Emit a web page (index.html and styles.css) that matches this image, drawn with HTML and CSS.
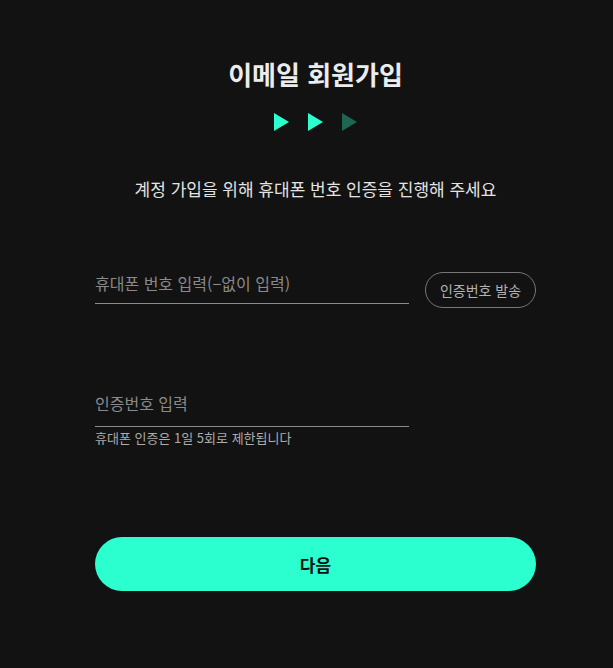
FILE: index.html
```html
<!DOCTYPE html>
<html lang="ko">
<head>
  <meta charset="UTF-8" />
  <meta name="viewport" content="width=device-width, initial-scale=1.0"/>
  <title>이메일 회원가입</title>
  <link rel="stylesheet" href="styles.css">
</head>
<body>
  <main class="signup">
    <h1>이메일 회원가입</h1>

    <div class="steps">
      <svg class="step done" width="15" height="18" viewBox="0 0 15 18"><polygon points="0,0 15,9 0,18" /></svg>
      <svg class="step done" width="15" height="18" viewBox="0 0 15 18"><polygon points="0,0 15,9 0,18" /></svg>
      <svg class="step" width="15" height="18" viewBox="0 0 15 18"><polygon points="0,0 15,9 0,18" /></svg>
    </div>

    <p class="lead">계정 가입을 위해 휴대폰 번호 인증을 진행해 주세요</p>

    <form id="phoneForm">
      <div class="phone-row">
        <input type="tel" id="phone" class="field phone" placeholder="휴대폰 번호 입력(−없이 입력)" />
        <button type="button" class="send-btn">인증번호 발송</button>
      </div>

      <input type="text" id="code" class="field code" placeholder="인증번호 입력" />
      <div class="hint">휴대폰 인증은 1일 5회로 제한됩니다</div>

      <button type="submit" class="next-btn">다음</button>
    </form>
  </main>
</body>
</html>
```

FILE: styles.css
```css
body {
  margin: 0;
  background-color: #121212;
  font-family: "Noto Sans CJK KR", "Noto Sans", sans-serif;
}

.signup {
  width: 441px;
  margin-left: 95px;
  padding-top: 56px;
}

h1 {
  margin: 0;
  font-size: 26px;
  line-height: 36px;
  font-weight: 700;
  color: #ececec;
  text-align: center;
}

.steps {
  display: flex;
  justify-content: center;
  gap: 19px;
  margin-top: 21px;
}

.step {
  display: block;
  fill: #1d6652;
}

.step.done {
  fill: #2bffcf;
}

.lead {
  margin: 46px 0 0;
  font-size: 17px;
  line-height: 24px;
  color: #e4e4e4;
  text-align: center;
}

.phone-row {
  display: flex;
  align-items: flex-start;
  gap: 16px;
  margin-top: 69px;
}

.field {
  display: block;
  box-sizing: border-box;
  height: 34px;
  padding: 0 0 8px;
  border: none;
  border-bottom: 1px solid #8a8a8a;
  background: transparent;
  font-family: inherit;
  font-size: 16px;
  line-height: 24px;
  color: #e4e4e4;
  outline: none;
}

.field::placeholder {
  color: #8a8a8a;
}

.phone {
  width: 314px;
}

.code {
  width: 314px;
  height: 37px;
  padding-bottom: 11px;
  margin-top: 82px;
}

.send-btn {
  box-sizing: border-box;
  width: 111px;
  height: 36px;
  margin-top: 2px;
  border: 1px solid #777;
  border-radius: 18px;
  background: transparent;
  font-family: inherit;
  font-size: 14px;
  color: #b2b2b2;
  cursor: pointer;
}

.hint {
  margin-top: 2px;
  font-size: 13px;
  line-height: 18px;
  color: #acacac;
}

.next-btn {
  display: block;
  width: 441px;
  height: 54px;
  margin-top: 90px;
  border: none;
  border-radius: 27px;
  background-color: #2bffcf;
  font-family: inherit;
  font-size: 17px;
  font-weight: 700;
  color: #111;
  cursor: pointer;
}
```
